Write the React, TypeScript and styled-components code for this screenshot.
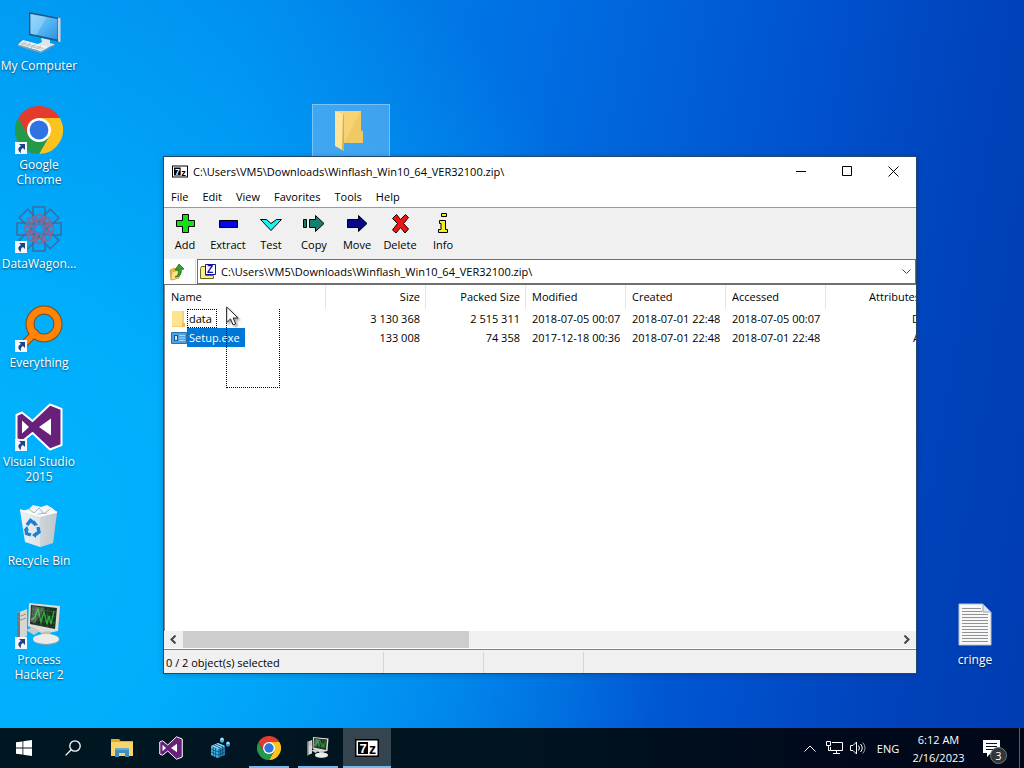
import React from 'react';
import styled, { createGlobalStyle } from 'styled-components';

type IconProps = { size?: number };

type Shortcut = {
  name: string;
  column: number;
  row: number;
  icon: JSX.Element;
  linked?: boolean;
  selected?: boolean;
};

type Tool = { name: string; icon: JSX.Element };

type FileEntry = {
  name: string;
  size: string;
  packed: string;
  modified: string;
  created: string;
  accessed: string;
  attributes: string;
  icon: JSX.Element;
  selected?: boolean;
};

const ARCHIVE_PATH = 'C:\\Users\\VM5\\Downloads\\Winflash_Win10_64_VER32100.zip\\';

/* ---------- icons ---------- */

function ComputerIcon({ size = 48 }: IconProps) {
  return (
    <svg width={size} height={size} viewBox="0 0 48 48">
      <defs>
        <linearGradient id="screen" x1="0" y1="0" x2="1" y2="1">
          <stop offset="0" stopColor="#8fd4fb" />
          <stop offset="0.5" stopColor="#55b6f4" />
          <stop offset="1" stopColor="#2b93e4" />
        </linearGradient>
      </defs>
      <path d="M14 5l31 6v24l-31-7z" fill="#24567d" />
      <path d="M43 10.600l2.500.600v24l-2.500-.6z" fill="#c9d5dc" />
      <path d="M15.500 7l27 5v20.500l-27-5.800z" fill="url(#screen)" />
      <path d="M15.500 7l16 3-10 18-6-1.300z" fill="#a9defc" opacity=".45" />
      <path d="M26 31l9 2v3l5 1.500-7 3-11-3 5-2.500z" fill="#dce6ec" />
      <path d="M22 37.500l11 3 7-3v1l-7 3.200-11-3z" fill="#7f98a8" />
      <path d="M8 33l26 7-8 4.500L3 37.500z" fill="#f2f5f7" />
      <path d="M3 37.500l23 7v1.500L3 39zM26 44.500l8-4.500v1.200l-8 4.800z" fill="#8fa3b0" />
      <path d="M7 35.500l22 6M5.500 36.600l21.500 6M11 34.200l-4 4M16 35.500l-4.500 4M21 37l-5 4M26 38.500l-5 4" stroke="#a9b9c3" strokeWidth=".8" fill="none" />
    </svg>
  );
}

function ChromeIcon({ size = 48 }: IconProps) {
  return (
    <svg width={size} height={size} viewBox="0 0 48 48">
      <path d="M24 12h20.800A24 24 0 0 1 24 48l10.400-18z" fill="#fcc31e" />
      <path d="M13.600 30L3.200 12A24 24 0 0 0 24 48l10.400-18z" fill="#24994a" />
      <path d="M3.200 12A24 24 0 0 1 44.800 12H24v12L13.600 30z" fill="#e33b2e" />
      <circle cx="24" cy="24" r="12" fill="#fff" />
      <circle cx="24" cy="24" r="9.400" fill="#2f72e2" />
    </svg>
  );
}

function DataWagonIcon({ size = 48 }: IconProps) {
  const turns = [0, 45, 90, 135, 180, 225, 270, 315];
  return (
    <svg width={size} height={size} viewBox="0 0 48 48" fill="none">
      {turns.map((turn) => (
        <g key={turn} transform={`rotate(${turn} 24 24)`}>
          <path d="M18 9V2h12v7l-6 8z" stroke="#3c6c9e" strokeWidth="1.500" />
          <path d="M24 20l-7-7 7-4 7 4z" stroke="#7d6c9c" strokeWidth="1.800" />
          <path d="M19 12l10 5M29 12l-10 5" stroke="#a06285" strokeWidth="1.200" />
        </g>
      ))}
      <circle cx="24" cy="24" r="5" stroke="#4c7eb8" strokeWidth="1.500" />
    </svg>
  );
}

function EverythingIcon({ size = 48 }: IconProps) {
  return (
    <svg width={size} height={size} viewBox="0 0 48 48" fill="none">
      <circle cx="29" cy="20" r="14" stroke="#7d4a1c" strokeWidth="9" />
      <path d="M20 29L6 43" stroke="#7d4a1c" strokeWidth="8" strokeLinecap="round" />
      <circle cx="29" cy="20" r="14" stroke="#ff8408" strokeWidth="7" />
      <path d="M20 29L6 43" stroke="#ff8408" strokeWidth="6" strokeLinecap="round" />
    </svg>
  );
}

function VisualStudioIcon({ size = 48 }: IconProps) {
  return (
    <svg width={size} height={size} viewBox="0 0 48 48">
      <path
        d="M35 1.500l11.500 4.500v36L35 46.500 17.500 30 7 38.500 1.500 36V12L7 9.500 17.500 18z"
        fill="#68217a"
        stroke="#fff"
        strokeWidth="2"
        strokeLinejoin="round"
      />
      <path d="M36 15.500l-12 8.500 12 8.500zM7 17.500v13l7-6.500z" fill="#fff" />
    </svg>
  );
}

function RecycleBinIcon({ size = 48 }: IconProps) {
  return (
    <svg width={size} height={size} viewBox="0 0 48 48">
      <defs>
        <linearGradient id="bin" x1="0" y1="0" x2="1" y2="0">
          <stop offset="0" stopColor="#eef2f5" />
          <stop offset="0.550" stopColor="#dce2e7" />
          <stop offset="1" stopColor="#a8b3bb" />
        </linearGradient>
      </defs>
      <path d="M7 9l7-2 4-4 8 2 6-2 5 3 5 4-4 8H10z" fill="#f3f5f7" />
      <path d="M14 7l5 4 5-5 5 6 6-5M10 10l8 4 10-3 9 2" stroke="#aab5bd" strokeWidth="1" fill="none" />
      <path d="M5 8l20 6 17-4-4 31-13 4-15-5z" fill="url(#bin)" />
      <path d="M25 14l17-4-4 31-13 4z" fill="#c8d0d6" opacity=".7" />
      <path d="M5 8l20 6 17-4" stroke="#fff" strokeWidth="1.500" fill="none" />
      <g fill="none" stroke="#1e7ed0" strokeWidth="3.400">
        <path d="M12 23l3.500-4.500L20 22" />
        <path d="M23 25l1 5-4 3" />
        <path d="M16 33l-4.500-1.500L11 27" />
      </g>
      <path d="M19 18v6l4-1zM21 30l-4 3 4 3zM8.500 28l3.500-4 2 4.500z" fill="#1e7ed0" />
    </svg>
  );
}

function ProcessHackerIcon({ size = 48 }: IconProps) {
  return (
    <svg width={size} height={size} viewBox="0 0 48 48">
      <path d="M2 12l10-4v27L2 39z" fill="#d6d6d2" />
      <path d="M2 12l3-1v27l-3 1z" fill="#73777a" />
      <path d="M3 16l8-3M3 20l8-3" stroke="#8b8f90" />
      <path d="M14 2l31 3-2 25-15 3-15-8z" fill="#dedcd6" />
      <path d="M16 4l26 3-2 21-25-5z" fill="#1d3324" />
      <path d="M17 8l24 3M17 13l23 3M16 18l24 4M21 5l-1 19M27 6l-1 19M33 7l-1 19" stroke="#2b6636" strokeWidth=".8" />
      <path d="M16 19l4-3 3-8 3 13 3-10 3 12 2-8 2 8 3-13" stroke="#2fae39" strokeWidth="1.300" fill="none" />
      <path d="M17 5l13 2-10 15-4-1z" fill="#fff" opacity=".22" />
      <path d="M27 31l8-1 1 6-9 1z" fill="#bfc0bc" />
      <ellipse cx="31" cy="39" rx="13" ry="5" fill="#9a9c9b" />
      <ellipse cx="31" cy="38" rx="13" ry="5" fill="#ebebe7" />
      <path d="M11 29l7-3 7 4-6 4z" fill="#c8cbcb" />
    </svg>
  );
}

function OpenFolderIcon({ size = 48 }: IconProps) {
  return (
    <svg width={size} height={size} viewBox="0 0 48 48">
      <path d="M8 5h26v19l2 2v11H12z" fill="#f5d372" />
      <path d="M33 6h1v18l2 2v11H17z" fill="#eec35a" opacity=".6" />
      <path d="M8 5l9 3v37l-9-5z" fill="#ffe49a" />
      <path d="M16 8l1 .3V45l-2-1z" fill="#d9ae4c" />
    </svg>
  );
}

function TextFileIcon({ size = 48 }: IconProps) {
  return (
    <svg width={size} height={size} viewBox="0 0 48 48">
      <path d="M8 3h24l8 8v33H8z" fill="#f8f8f8" stroke="#b9bfc8" strokeWidth="1" />
      <path d="M11 7.500h19M11 10.500h20M11 13.500h26M11 16.500h26M11 19.500h26M11 22.500h26M11 25.500h26M11 28.500h26M11 31.500h26M11 34.500h26M11 37.500h26M11 40.500h26" stroke="#8f9396" strokeWidth="1" />
      <path d="M32 3v8h8z" fill="#dfe7f1" stroke="#98a2b0" strokeWidth="1" />
    </svg>
  );
}

function SevenZipIcon({ width = 24, height = 18 }: { width?: number; height?: number }) {
  return (
    <svg
      width={width}
      height={height}
      viewBox="0 0 24 18"
      fontFamily="'Liberation Sans', sans-serif"
      fontWeight="700"
    >
      <path d="M0 0h24v18H0z" fill="#000" />
      <path d="M1.500 1.500h21v15h-21z" fill="#fff" />
      <path d="M3 3h10v12H3z" fill="#000" />
      <text x="4.500" y="14" fontSize="13" fill="#fff">7</text>
      <text x="14" y="15" fontSize="14" fill="#000">z</text>
    </svg>
  );
}

function ShortcutArrow() {
  return (
    <svg width="12" height="12" viewBox="0 0 12 12">
      <path d="M0 0h12v12H0z" fill="#f4f7fa" />
      <path d="M4 2h6v6L8 6C6 7 5.500 8.500 6 11 2.500 9 2.500 5.500 6 4z" fill="#1d4487" />
    </svg>
  );
}

function ToolIcon({ children }: { children: React.ReactNode }) {
  return (
    <svg width="24" height="24" viewBox="0 0 24 24" stroke="#000" strokeWidth="1">
      {children}
    </svg>
  );
}

function SmallFolderIcon() {
  return (
    <svg width="16" height="16" viewBox="0 0 16 16">
      <path d="M1 0h12v12l1 1v3H1z" fill="#f4d272" />
      <path d="M1 0h10v15H1z" fill="#ffe48f" />
      <path d="M11 12h3v4h-3z" fill="#e8bf58" />
    </svg>
  );
}

function ProgramIcon() {
  return (
    <svg width="16" height="16" viewBox="0 0 16 16">
      <path d="M.5 2.500h15v11H.5z" fill="#4ea3df" stroke="#2672b0" />
      <path d="M3 5h4v6H3z" fill="#11599b" />
      <path d="M4 6h2v4H4z" fill="#cde9fb" />
      <path d="M8 5.500h6M8 8h6M8 10.500h6" stroke="#a8d7f6" />
    </svg>
  );
}

function UpFolderIcon() {
  return (
    <svg width="16" height="18" viewBox="0 0 16 18">
      <path d="M1 7l5-2 1 2h3v8l-8 2z" fill="#e7b94a" stroke="#b98a24" strokeWidth=".6" />
      <path d="M3 9l8-2-1 8-8 2z" fill="#ffe28a" stroke="#c99d3b" strokeWidth=".6" />
      <path d="M6 14c3-1 4-4 3-7H6l4-6 5 5-3 .500c1 4-1 8-6 7.500z" fill="#35a32b" stroke="#12600f" strokeWidth=".7" />
    </svg>
  );
}

function ArchiveIcon() {
  return (
    <svg width="16" height="16" viewBox="0 0 16 16">
      <path d="M.5 4.500l1-2h4v9h8v3H.5z" fill="#f8f08c" stroke="#6c6820" />
      <path d="M5.500.500h10v10h-10z" fill="#fff" stroke="#0f0fae" />
      <text x="7" y="9" fontFamily="'Liberation Sans', sans-serif" fontWeight="700" fontSize="10" fill="#0f0fae">
        Z
      </text>
    </svg>
  );
}

function WindowsIcon() {
  return (
    <svg width="16" height="16" viewBox="0 0 16 16" fill="#fff">
      <path d="M0 2.300l6.500-.9v6.200H0zM7.300 1.300L16 0v7.600H7.300zM0 8.400h6.500v6.200L0 13.700zM7.300 8.400H16V16l-8.700-1.300z" />
    </svg>
  );
}

function SearchIcon() {
  return (
    <svg width="16" height="16" viewBox="0 0 16 16" fill="none" stroke="#fff" strokeWidth="1.300">
      <circle cx="10" cy="6" r="5.200" />
      <path d="M6.200 9.800L.6 15.400" />
    </svg>
  );
}

function ExplorerIcon() {
  return (
    <svg width="22" height="20" viewBox="0 0 22 20">
      <path d="M0 1h8l1.500 2H22v15H0z" fill="#e8a820" />
      <path d="M0 4h22v14H0z" fill="#fbd468" />
      <path d="M4 10h14v9h-4v-4H8v4H4z" fill="#3d8fc0" />
      <path d="M4 10h14v2H4z" fill="#5faed8" />
    </svg>
  );
}

function RegistryIcon() {
  return (
    <svg width="22" height="22" viewBox="0 0 22 22">
      <path d="M2 9l7-3 7 3v9l-7 3-7-3z" fill="#1f86bc" />
      <path d="M2 9l7-3 7 3-7 3z" fill="#8fdcf6" />
      <path d="M2 9l7 3v9l-7-3z" fill="#49b5e0" />
      <path d="M4.300 10v9M6.600 11v9M2 12l7 3 7-3M2 15l7 3 7-3M11.300 11v9M13.600 10v9M4.500 8l7 3M7 7l7 3" stroke="#0d4a72" strokeWidth=".8" fill="none" />
      <path d="M11 2l2-1.500L15 2v2.500L13 6l-2-1.500z" fill="#45b8e6" />
      <path d="M17 6l2-1.500L21 6v2.500L19 10l-2-1.500z" fill="#2a9bd0" />
      <path d="M11 2l2-1.500L15 2l-2 1.300zM17 6l2-1.500L21 6l-2 1.300z" fill="#b0ecff" />
    </svg>
  );
}

function NetworkIcon() {
  return (
    <svg width="17" height="16" viewBox="0 0 17 16" fill="none" stroke="#fff">
      <path d="M6 2.500h10.500v8H4.500V7M10.500 10.500v3M7 13.500h7" />
      <path d="M.5 1.500h4v4h-4zM2.500 5.500v5h2" />
    </svg>
  );
}

function VolumeIcon() {
  return (
    <svg width="17" height="14" viewBox="0 0 17 14" fill="none" stroke="#fff">
      <path d="M.5 4.500h2.500L6.500 1v12L3 9.500H.5z" />
      <path d="M8.500 4.500q2 2.500 0 5M10.500 3q3.500 4 0 8" />
      <path d="M12.800 1.500q4.500 5.500 0 11" opacity=".6" />
    </svg>
  );
}

function MessageIcon() {
  return (
    <svg width="17" height="17" viewBox="0 0 17 17">
      <path d="M0 0h17v13h-9l-4 4v-4H0z" fill="#fff" />
      <path d="M3 3.500h11M3 6.500h11M3 9.500h8" stroke="#0a1420" />
    </svg>
  );
}

function PointerIcon() {
  return (
    <svg width="13" height="21" viewBox="0 0 13 21">
      <path d="M.7 1v15.500l3.800-3.600 2.600 6 2.600-1.100-2.600-5.800h5z" fill="#fff" stroke="#222" strokeWidth="1" />
    </svg>
  );
}

/* ---------- data ---------- */

const shortcuts: Shortcut[] = [
  { name: 'My Computer', column: 1, row: 1, icon: <ComputerIcon /> },
  { name: 'Google Chrome', column: 1, row: 2, icon: <ChromeIcon />, linked: true },
  { name: 'DataWagon...', column: 1, row: 3, icon: <DataWagonIcon />, linked: true },
  { name: 'Everything', column: 1, row: 4, icon: <EverythingIcon />, linked: true },
  { name: 'Visual Studio 2015', column: 1, row: 5, icon: <VisualStudioIcon />, linked: true },
  { name: 'Recycle Bin', column: 1, row: 6, icon: <RecycleBinIcon /> },
  { name: 'Process Hacker 2', column: 1, row: 7, icon: <ProcessHackerIcon />, linked: true },
  { name: '', column: 5, row: 2, icon: <OpenFolderIcon />, selected: true },
  { name: 'cringe', column: 13, row: 7, icon: <TextFileIcon /> },
];

const menus = ['File', 'Edit', 'View', 'Favorites', 'Tools', 'Help'];

const tools: Tool[] = [
  { name: 'Add', icon: <ToolIcon><path d="M9.500 2.500h6v6h6v6h-6v6h-6v-6h-6v-6h6z" fill="#15e015" /></ToolIcon> },
  { name: 'Extract', icon: <ToolIcon><path d="M3.500 8.500h18v7h-18z" fill="#0505e6" /></ToolIcon> },
  { name: 'Test', icon: <ToolIcon><path d="M1.500 7.500h6l4.500 4 5.500-4h5l-10.500 11z" fill="#22eef0" /></ToolIcon> },
  { name: 'Copy', icon: <ToolIcon><path d="M1.500 7.500h3v8h-3zM7.500 7.500h6v-4l8.500 8-8.500 8v-4h-6z" fill="#11806f" /></ToolIcon> },
  { name: 'Move', icon: <ToolIcon><path d="M2.500 7.500h11v-4l8.500 8-8.500 8v-4h-11z" fill="#08088a" /></ToolIcon> },
  { name: 'Delete', icon: <ToolIcon><path d="M4.500 6.500l4-4 4 5 5-5 3 3-5 6 5 5.500-3.500 4-4.500-5.500-4.500 5.500-3.500-3 5-6.500z" fill="#ee1414" /></ToolIcon> },
  { name: 'Info', icon: <ToolIcon><path d="M10.500 1.500h5v3h-5zM8.500 8.500h6v9h2v3h-9v-3h2.500v-6H8.500z" fill="#f6ee16" /></ToolIcon> },
];

const files: FileEntry[] = [
  {
    name: 'data',
    size: '3 130 368',
    packed: '2 515 311',
    modified: '2018-07-05 00:07',
    created: '2018-07-01 22:48',
    accessed: '2018-07-05 00:07',
    attributes: 'D',
    icon: <SmallFolderIcon />,
  },
  {
    name: 'Setup.exe',
    size: '133 008',
    packed: '74 358',
    modified: '2017-12-18 00:36',
    created: '2018-07-01 22:48',
    accessed: '2018-07-01 22:48',
    attributes: 'A',
    icon: <ProgramIcon />,
    selected: true,
  },
];

/* ---------- desktop ---------- */

function DesktopIcon({ shortcut }: { shortcut: Shortcut }): JSX.Element {
  const { name, column, row, icon, linked, selected } = shortcut;
  return (
    <IconCell $column={column} $row={row} $selected={selected}>
      <IconArt>
        {icon}
        {linked && (
          <ShortcutBadge>
            <ShortcutArrow />
          </ShortcutBadge>
        )}
      </IconArt>
      <IconLabel>{name}</IconLabel>
    </IconCell>
  );
}

function FileTable(): JSX.Element {
  return (
    <Table>
      <colgroup>
        <Column $width={161} />
        <Column $width={100} />
        <Column $width={100} />
        <Column $width={100} />
        <Column $width={100} />
        <Column $width={100} />
        <Column $width={100} />
      </colgroup>
      <thead>
        <tr>
          <HeadCell>Name</HeadCell>
          <HeadCell $right>Size</HeadCell>
          <HeadCell $right>Packed Size</HeadCell>
          <HeadCell>Modified</HeadCell>
          <HeadCell>Created</HeadCell>
          <HeadCell>Accessed</HeadCell>
          <HeadCell $right>Attributes</HeadCell>
        </tr>
      </thead>
      <tbody>
        {files.map((file) => (
          <tr key={file.name}>
            <Cell>
              <FileName>
                {file.icon}
                <FileLabel $selected={file.selected}>{file.name}</FileLabel>
              </FileName>
            </Cell>
            <Cell $right>{file.size}</Cell>
            <Cell $right>{file.packed}</Cell>
            <Cell>{file.modified}</Cell>
            <Cell>{file.created}</Cell>
            <Cell>{file.accessed}</Cell>
            <Cell $right>{file.attributes}</Cell>
          </tr>
        ))}
      </tbody>
    </Table>
  );
}

function ArchiveWindow(): JSX.Element {
  return (
    <Window>
      <TitleBar>
        <SevenZipIcon width={16} height={13} />
        <Title>{ARCHIVE_PATH}</Title>
        <CaptionButton aria-label="Minimize">
          <svg width="11" height="11" stroke="#000"><path d="M0 5.500h10" /></svg>
        </CaptionButton>
        <CaptionButton aria-label="Maximize">
          <svg width="11" height="11" stroke="#000" fill="none"><path d="M.5.500h9v9h-9z" /></svg>
        </CaptionButton>
        <CaptionButton aria-label="Close">
          <svg width="11" height="11" stroke="#000"><path d="M.5.500l10 10M10.500.500l-10 10" /></svg>
        </CaptionButton>
      </TitleBar>
      <MenuBar>
        {menus.map((menu) => (
          <MenuButton key={menu}>{menu}</MenuButton>
        ))}
      </MenuBar>
      <Toolbar>
        {tools.map((tool) => (
          <ToolButton key={tool.name}>
            {tool.icon}
            {tool.name}
          </ToolButton>
        ))}
      </Toolbar>
      <AddressBar>
        <UpButton aria-label="Up one level">
          <UpFolderIcon />
        </UpButton>
        <AddressBox>
          <ArchiveIcon />
          <AddressInput aria-label="Address" defaultValue={ARCHIVE_PATH} />
          <DropButton aria-label="Show addresses">
            <svg width="9" height="6" fill="none" stroke="#444"><path d="M.5.500l4 4 4-4" /></svg>
          </DropButton>
        </AddressBox>
      </AddressBar>
      <FileList>
        <FileTable />
        <Marquee />
        <Pointer>
          <PointerIcon />
        </Pointer>
      </FileList>
      <ScrollBar>
        <ScrollButton aria-label="Scroll left">
          <svg width="7" height="9" fill="none" stroke="#444" strokeWidth="2"><path d="M5.500.500l-4 4 4 4" /></svg>
        </ScrollButton>
        <ScrollTrack>
          <ScrollThumb />
        </ScrollTrack>
        <ScrollButton aria-label="Scroll right">
          <svg width="7" height="9" fill="none" stroke="#444" strokeWidth="2"><path d="M1.500.500l4 4-4 4" /></svg>
        </ScrollButton>
      </ScrollBar>
      <StatusBar>
        <StatusCell $width={220}>0 / 2 object(s) selected</StatusCell>
        <StatusCell $width={100} />
        <StatusCell $width={100} />
      </StatusBar>
    </Window>
  );
}

function Taskbar(): JSX.Element {
  return (
    <Bar>
      <TaskButton aria-label="Start"><WindowsIcon /></TaskButton>
      <TaskButton aria-label="Search"><SearchIcon /></TaskButton>
      <TaskButton aria-label="File Explorer"><ExplorerIcon /></TaskButton>
      <TaskButton aria-label="Visual Studio"><VisualStudioIcon size={24} /></TaskButton>
      <TaskButton aria-label="Registry Editor"><RegistryIcon /></TaskButton>
      <TaskButton aria-label="Google Chrome" $running><ChromeIcon size={24} /></TaskButton>
      <TaskButton aria-label="Process Hacker" $running><ProcessHackerIcon size={24} /></TaskButton>
      <TaskButton aria-label="7-Zip" $running $active><SevenZipIcon /></TaskButton>
      <Tray>
        <TrayButton aria-label="Show hidden icons">
          <svg width="12" height="7" fill="none" stroke="#fff"><path d="M.5 6.500L6 1l5.500 5.500" /></svg>
        </TrayButton>
        <TrayButton aria-label="Network"><NetworkIcon /></TrayButton>
        <TrayButton aria-label="Volume"><VolumeIcon /></TrayButton>
        <Language>ENG</Language>
        <Clock>
          <span>6:12 AM</span>
          <span>2/16/2023</span>
        </Clock>
        <Notifications aria-label="Notifications">
          <MessageIcon />
          <Count>3</Count>
        </Notifications>
        <ShowDesktop aria-label="Show desktop" />
      </Tray>
    </Bar>
  );
}

export default function App(): JSX.Element {
  return (
    <Screen>
      <GlobalStyle />
      <Desktop>
        <IconGrid>
          {shortcuts.map((shortcut) => (
            <DesktopIcon key={`${shortcut.column}-${shortcut.row}`} shortcut={shortcut} />
          ))}
        </IconGrid>
        <ArchiveWindow />
      </Desktop>
      <Taskbar />
    </Screen>
  );
}

/* ---------- styles ---------- */

const GlobalStyle = createGlobalStyle`
  * {
    box-sizing: border-box;
  }

  body {
    margin: 0;
    overflow: hidden;
    font-family: 'Open Sans', 'Noto Sans', sans-serif;
    font-size: 11px;
    line-height: 15px;
    color: #000;
  }

  button,
  input {
    margin: 0;
    padding: 0;
    border: 0;
    background: none;
    font: inherit;
    color: inherit;
  }

  svg {
    display: block;
    flex: none;
  }
`;

const Screen = styled.div`
  display: flex;
  flex-direction: column;
  height: 100vh;
  background:
    radial-gradient(ellipse 66% 92% at 0% 70%, #00b4ff 0%, rgba(0, 180, 255, 0.85) 32%, rgba(0, 150, 245, 0) 100%),
    linear-gradient(99deg, #0092ee 0%, #0088ec 22%, #006ee2 48%, #0052ce 72%, #0042ba 88%, #003cb2 100%);
`;

const Desktop = styled.main`
  position: relative;
  flex: 1;
  min-height: 0;
`;

const IconGrid = styled.div`
  display: grid;
  grid-template-columns: repeat(auto-fill, 78px);
  grid-auto-rows: 99px;
  padding-top: 5px;
`;

const IconCell = styled.button<{ $column: number; $row: number; $selected?: boolean }>`
  grid-column: ${({ $column }) => $column};
  grid-row: ${({ $row }) => $row};
  display: flex;
  flex-direction: column;
  align-items: center;
  gap: 3px;
  padding-top: 2px;
  font-size: 12px;
  color: #fff;
  background: ${({ $selected }) => ($selected ? 'rgba(140, 195, 245, 0.45)' : 'none')};
  box-shadow: ${({ $selected }) => ($selected ? 'inset 0 0 0 1px rgba(160, 215, 255, 0.6)' : 'none')};
`;

const IconArt = styled.div`
  position: relative;
`;

const ShortcutBadge = styled.span`
  position: absolute;
  left: 0;
  bottom: 0;
`;

const IconLabel = styled.span`
  text-shadow: 0 1px 2px rgba(0, 0, 0, 0.6);
`;

const Window = styled.section`
  position: absolute;
  inset: 156px 107px 54px 163px;
  display: flex;
  flex-direction: column;
  border: 1px solid #23476a;
  background: #fff;
  box-shadow: 0 1px 6px rgba(0, 0, 0, 0.2);
`;

const TitleBar = styled.header`
  display: flex;
  align-items: center;
  height: 29px;
  padding-left: 8px;
`;

const Title = styled.h1`
  flex: 1;
  margin: 0 0 0 5px;
  font-size: 11px;
  font-weight: 400;
`;

const CaptionButton = styled.button`
  display: flex;
  align-items: center;
  justify-content: center;
  width: 46px;
  height: 29px;
`;

const MenuBar = styled.nav`
  display: flex;
  height: 22px;
  border-bottom: 1px solid #9a9a9a;
`;

const MenuButton = styled.button`
  padding: 0 7px;
`;

const Toolbar = styled.div`
  display: flex;
  height: 51px;
  padding-top: 4px;
  background: #f0f0f0;
`;

const ToolButton = styled.button`
  display: flex;
  flex-direction: column;
  align-items: center;
  gap: 1px;
  width: 43px;
  padding-right: 1px;
`;

const AddressBar = styled.div`
  display: flex;
  height: 26px;
  background: #fff;
  border-bottom: 1px solid #6f6f6f;
`;

const UpButton = styled.button`
  display: flex;
  align-items: center;
  justify-content: center;
  width: 32px;
  padding-right: 6px;
  border-right: 1px solid #dcdcdc;
`;

const AddressBox = styled.div`
  flex: 1;
  display: flex;
  align-items: center;
  gap: 5px;
  margin-left: 1px;
  padding-left: 2px;
  border: 1px solid #707070;
`;

const AddressInput = styled.input`
  flex: 1;
  min-width: 0;
  outline: 0;
`;

const DropButton = styled.button`
  display: flex;
  align-items: center;
  justify-content: center;
  width: 17px;
`;

const FileList = styled.div`
  position: relative;
  flex: 1;
  min-height: 0;
  overflow: hidden;
  border-left: 1px solid #8a8a8a;
`;

const Table = styled.table`
  width: 761px;
  table-layout: fixed;
  border-collapse: separate;
  border-spacing: 0;
`;

const Column = styled.col<{ $width: number }>`
  width: ${({ $width }) => $width}px;
`;

const HeadCell = styled.th<{ $right?: boolean }>`
  height: 24px;
  padding: 0 5px 2px 6px;
  border-right: 1px solid #e5e5e5;
  font-weight: 400;
  text-align: ${({ $right }) => ($right ? 'right' : 'left')};
  white-space: nowrap;
`;

const Cell = styled.td<{ $right?: boolean }>`
  height: 19px;
  padding: 0 6px;
  text-align: ${({ $right }) => ($right ? 'right' : 'left')};
  white-space: nowrap;
`;

const FileName = styled.div`
  display: flex;
  align-items: center;
`;

const FileLabel = styled.span<{ $selected?: boolean }>`
  padding: 1px 4px 1px 1px;
  border: 1px ${({ $selected }) => ($selected ? 'solid #0078d7' : 'dotted #000')};
  background: ${({ $selected }) => ($selected ? '#0078d7' : 'transparent')};
  color: ${({ $selected }) => ($selected ? '#fff' : 'inherit')};
`;

const Marquee = styled.div`
  position: absolute;
  left: 61px;
  top: 24px;
  width: 54px;
  height: 79px;
  border: 1px dotted #000;
  border-top: 0;
`;

const Pointer = styled.div`
  position: absolute;
  left: 61px;
  top: 21px;
  filter: drop-shadow(2px 2px 1px rgba(0, 0, 0, 0.35));
`;

const ScrollBar = styled.div`
  display: flex;
  height: 17px;
  margin-bottom: 1px;
  background: #f0f0f0;
`;

const ScrollButton = styled.button`
  display: flex;
  align-items: center;
  justify-content: center;
  width: 19px;
`;

const ScrollTrack = styled.div`
  flex: 1;
`;

const ScrollThumb = styled.div`
  width: 40%;
  height: 100%;
  background: #cdcdcd;
`;

const StatusBar = styled.footer`
  display: flex;
  height: 24px;
  padding-top: 2px;
  border-top: 1px solid #808080;
  background: #f0f0f0;
`;

const StatusCell = styled.div<{ $width: number }>`
  width: ${({ $width }) => $width}px;
  padding: 3px 2px;
  border-right: 1px solid #d5d5d5;
`;

const Bar = styled.footer`
  display: flex;
  gap: 1px;
  height: 40px;
  background: linear-gradient(90deg, #001722 0%, #001420 50%, #000a1c 80%, #000818 100%);
  color: #fff;
`;

const TaskButton = styled.button<{ $running?: boolean; $active?: boolean }>`
  display: flex;
  align-items: center;
  justify-content: center;
  width: 48px;
  background:
    linear-gradient(${({ $running }) => ($running ? '#76b9ed, #76b9ed' : 'transparent, transparent')})
      center bottom / ${({ $active }) => ($active ? '48px' : '40px')} 2px no-repeat,
    ${({ $active }) => ($active ? '#35454f' : 'transparent')};
`;

const Tray = styled.div`
  display: flex;
  align-items: center;
  margin-left: auto;
`;

const TrayButton = styled.button`
  display: flex;
  align-items: center;
  justify-content: center;
  width: 24px;
  height: 40px;
`;

const Language = styled.button`
  width: 36px;
`;

const Clock = styled.time`
  display: flex;
  flex-direction: column;
  align-items: center;
  gap: 3px;
  width: 65px;
`;

const Notifications = styled.button`
  position: relative;
  display: flex;
  align-items: center;
  justify-content: center;
  width: 40px;
  height: 40px;
`;

const Count = styled.span`
  position: absolute;
  right: 4px;
  bottom: 4px;
  width: 17px;
  height: 17px;
  border: 1px solid #70777d;
  border-radius: 50%;
  background: #30363c;
`;

const ShowDesktop = styled.button`
  width: 5px;
  height: 40px;
  margin-left: 8px;
  border-left: 1px solid #56606a;
`;
